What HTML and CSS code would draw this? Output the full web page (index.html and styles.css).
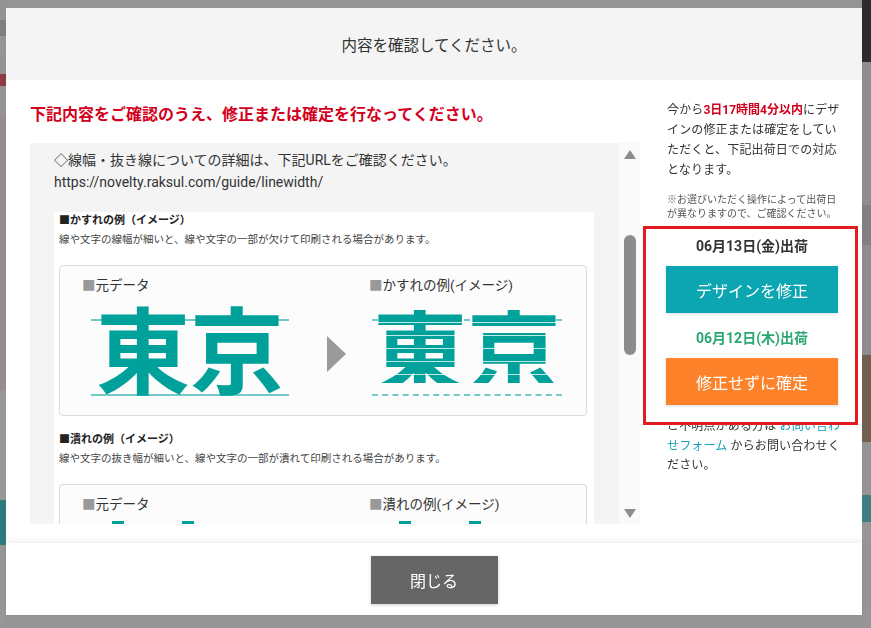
FILE: index.html
```html
<!DOCTYPE html>
<html lang="ja">
<head>
<meta charset="utf-8">
<title>内容を確認してください。</title>
<link rel="stylesheet" href="styles.css">
</head>
<body>
<div class="page">
  <div class="strip strip-left">
    <div class="band l1"></div><div class="band l2"></div><div class="band l3"></div><div class="band l4"></div>
    <div class="band l5"></div><div class="band l6"></div><div class="band l7"></div><div class="band l8"></div>
    <div class="band l9"></div><div class="band l10"></div>
  </div>
  <div class="strip strip-right">
    <div class="band r1"></div><div class="band r2"></div><div class="band r3"></div><div class="band r4"></div>
    <div class="band r5"></div><div class="band r6"></div><div class="band r7"></div><div class="band r8"></div>
  </div>
</div>

<div class="modal">
  <div class="modal-head">内容を確認してください。</div>
  <div class="modal-body">
    <div class="main">
      <p class="alert">下記内容をご確認のうえ、修正または確定を行なってください。</p>
      <div class="scroll">
        <div class="scroll-content">
          <p class="intro">◇線幅・抜き線についての詳細は、下記URLをご確認ください。<br>https://novelty.raksul.com/guide/linewidth/</p>
          <div class="guide">
            <section class="ex">
              <h4>■かすれの例（イメージ）</h4>
              <p>線や文字の線幅が細いと、線や文字の一部が欠けて印刷される場合があります。</p>
              <div class="ex-box">
                <div class="panel panel-a">
                  <div class="ex-label"><span class="sq">■</span>元データ</div>
                  <div class="kanji"><span>東京</span></div>
                </div>
                <div class="ex-arrow"></div>
                <div class="panel panel-b">
                  <div class="ex-label"><span class="sq">■</span>かすれの例(イメージ)</div>
                  <div class="kanji kanji-worn"><span>東京</span></div>
                </div>
              </div>
            </section>
            <section class="ex">
              <h4>■潰れの例（イメージ）</h4>
              <p>線や文字の抜き幅が細いと、線や文字の一部が潰れて印刷される場合があります。</p>
              <div class="ex-box ex-box-cut">
                <div class="panel panel-a">
                  <div class="ex-label"><span class="sq">■</span>元データ</div>
                  <div class="kanji-stub"><i></i><i></i></div>
                </div>
                <div class="panel panel-b panel-b-cut">
                  <div class="ex-label"><span class="sq">■</span>潰れの例(イメージ)</div>
                  <div class="kanji-stub"><i></i><i></i></div>
                </div>
              </div>
            </section>
          </div>
        </div>
        <div class="scrollbar">
          <span class="sb-up"></span>
          <span class="sb-thumb"></span>
          <span class="sb-down"></span>
        </div>
      </div>
    </div>
    <aside class="side">
      <p class="lead">今から<strong>3日17時間4分以内</strong>にデザインの修正または確定をしていただくと、下記出荷日での対応となります。</p>
      <p class="note">※お選びいただく操作によって出荷日が異なりますので、ご確認ください。</p>
      <div class="ship">
        <div class="ship-date">06月13日(金)出荷</div>
        <button class="btn btn-fix">デザインを修正</button>
        <div class="ship-date date-b">06月12日(木)出荷</div>
        <button class="btn btn-ok">修正せずに確定</button>
      </div>
      <p class="ask">ご不明点がある方は <a href="#" class="link">お問い合わせフォーム</a> からお問い合わせください。</p>
    </aside>
  </div>
  <div class="modal-foot">
    <button class="close">閉じる</button>
  </div>
</div>
</body>
</html>
```

FILE: styles.css
```css
html, body { margin: 0; padding: 0; }
body {
  background: #959595;
  font-family: Roboto, "Noto Sans CJK JP", sans-serif;
  color: #333;
  width: 871px;
  height: 628px;
  overflow: hidden;
}

/* background page slivers */
.page { display: flex; justify-content: space-between; height: 628px; }
.strip { display: flex; flex-direction: column; }
.strip-left { width: 6px; }
.strip-right { width: 9px; }
.band { flex: none; }
.l1 { height: 20px; background: #939393; }
.l2 { height: 16px; background: #7f7f7f; }
.l3 { height: 21px; background: #959595; }
.l4 { height: 17px; background: #969292; }
.l5 { height: 12px; background: #8c3d44; }
.l6 { height: 32px; background: #979292; }
.l7 { height: 272px; background: #978c8c; }
.l8 { height: 110px; background: #969696; }
.l9 { height: 45px; background: #2d7a7e; }
.l10 { height: 83px; background: #979797; }
.r1 { height: 62px; background: #2c2c2c; }
.r2 { height: 143px; background: #8e8e8e; }
.r3 { height: 40px; background: #808080; }
.r4 { height: 110px; background: #8d8d8d; }
.r5 { height: 87px; background: #735f4f; }
.r6 { height: 53px; background: #949494; }
.r7 { height: 27px; background: #3f7f83; }
.r8 { height: 106px; background: #969696; }

/* modal */
.modal {
  position: fixed;
  left: 6px;
  top: 8px;
  width: 856px;
  height: 607px;
  background: #fff;
  display: flex;
  flex-direction: column;
}
.modal-head {
  flex: none;
  height: 72px;
  background: #f4f4f4;
  display: flex;
  align-items: center;
  justify-content: center;
  font-size: 15.5px;
  color: #333;
}
.modal-body { flex: 1; display: flex; min-height: 0; }

.main { flex: none; width: 610px; padding: 23px 0 0 24px; }
.alert {
  margin: 0 0 16px;
  font-size: 16px;
  line-height: 24px;
  font-weight: 700;
  color: #d3001c;
  white-space: nowrap;
}
.scroll { height: 381px; display: flex; background: #f4f4f4; }
.scroll-content { flex: 1; overflow: hidden; padding: 6px 24px 0 24px; }
.intro { margin: 0 0 19px; font-size: 14px; line-height: 22px; color: #333; white-space: nowrap; }

.scrollbar {
  flex: none;
  width: 21px;
  background: #fafafa;
  display: flex;
  flex-direction: column;
  align-items: center;
  padding: 7px 0 6px;
  box-sizing: border-box;
}
.sb-up { border-left: 6px solid transparent; border-right: 6px solid transparent; border-bottom: 9px solid #8c8c8c; }
.sb-thumb { width: 12px; height: 120px; border-radius: 6px; background: #8c8c8c; margin-top: 76px; }
.sb-down { margin-top: auto; border-left: 6px solid transparent; border-right: 6px solid transparent; border-top: 9px solid #8c8c8c; }

.guide { width: 540px; background: #fff; padding: 0 5px; box-sizing: border-box; }
.ex h4 { margin: 0; font-size: 11px; line-height: 18px; font-weight: 700; color: #222; }
.ex p { margin: 1px 0 0; font-size: 10.5px; line-height: 18px; color: #444; white-space: nowrap; }
.ex + .ex { margin-top: 15px; }
.ex-box {
  margin: 16px 2px 0 0;
  height: 151px;
  border: 1px solid #dcdcdc;
  border-radius: 4px;
  background: #fbfcfb;
  display: flex;
  align-items: flex-start;
  padding: 9px 0 0 22px;
  box-sizing: border-box;
}
.ex-box-cut { height: 40px; border-bottom: 0; border-radius: 4px 4px 0 0; }
.ex-label { font-size: 13.5px; line-height: 20px; color: #333; white-space: nowrap; }
.sq { color: #999; }
.panel-a { width: 245px; }
.panel-b { margin-left: 23px; }
.panel-b-cut { margin-left: 42px; }
.kanji {
  margin: 24px 0 0 9px;
  width: 198px;
  height: 73px;
  border-top: 2px solid #72c9c5;
  border-bottom: 2px solid #72c9c5;
}
.panel-b .kanji { margin-left: 3px; width: 190px; }
.kanji span {
  display: block;
  margin-top: -11px;
  line-height: 73px;
  font-family: "Noto Sans CJK JP", sans-serif;
  font-size: 94px;
  font-weight: 700;
  color: #00a19a;
  text-align: center;
  letter-spacing: 0;
  white-space: nowrap;
}
.kanji-worn { border-top-style: dashed; border-bottom-style: dashed; }
.kanji-worn span {
  background: repeating-linear-gradient(180deg, #00a19a 0 12px, #bfe7e4 12px 13px);
  -webkit-background-clip: text;
  background-clip: text;
  color: transparent;
}
.kanji-stub { display: flex; gap: 58px; margin: 7px 0 0 30px; }
.kanji-stub i { width: 12px; height: 4px; background: #00a19a; }
.ex-arrow {
  flex: none;
  width: 0;
  height: 0;
  border-top: 18px solid transparent;
  border-bottom: 18px solid transparent;
  border-left: 19px solid #9a9a9a;
  margin-top: 61px;
}

/* side */
.side { flex: none; width: 222px; padding: 20px 21px 0 27px; box-sizing: border-box; }
.lead { margin: 0; font-size: 12px; line-height: 20px; letter-spacing: .15px; color: #333; }
.lead strong { color: #d3001c; font-weight: 700; letter-spacing: 0; }
.note { margin: 13px 0 0; font-size: 10px; line-height: 14px; color: #555; }
.ship {
  position: relative;
  z-index: 1;
  margin: 5px -17px 0 -24px;
  border: 3px solid #e31b23;
  background: #fff;
  padding: 7px 0 17px 20px;
}
.ship-date { width: 172px; text-align: center; font-size: 14px; line-height: 20px; font-weight: 700; color: #333; }
.date-b { margin-top: 15px; color: #2aa772; }
.btn {
  display: block;
  width: 172px;
  height: 47px;
  margin-top: 10px;
  border: 0;
  padding: 0;
  color: #fff;
  font-family: inherit;
  font-size: 16px;
  box-shadow: 0 1px 3px rgba(0, 0, 0, .15);
}
.btn-fix { background: #0ba6b1; }
.btn-ok { background: #fd8229; }
.ask { margin: -8px 0 0; font-size: 12px; line-height: 19.5px; letter-spacing: .15px; color: #333; }
.link { color: #14a0b8; text-decoration: none; }

/* footer */
.modal-foot {
  flex: none;
  height: 72px;
  display: flex;
  justify-content: center;
  padding-top: 13px;
  box-sizing: border-box;
  background: #fff;
  box-shadow: 0 -2px 6px rgba(0, 0, 0, .08);
}
.close {
  width: 127px;
  height: 48px;
  border: 0;
  background: #666;
  color: #fff;
  font-family: inherit;
  font-size: 16px;
  box-shadow: 0 1px 3px rgba(0, 0, 0, .2);
}
```
